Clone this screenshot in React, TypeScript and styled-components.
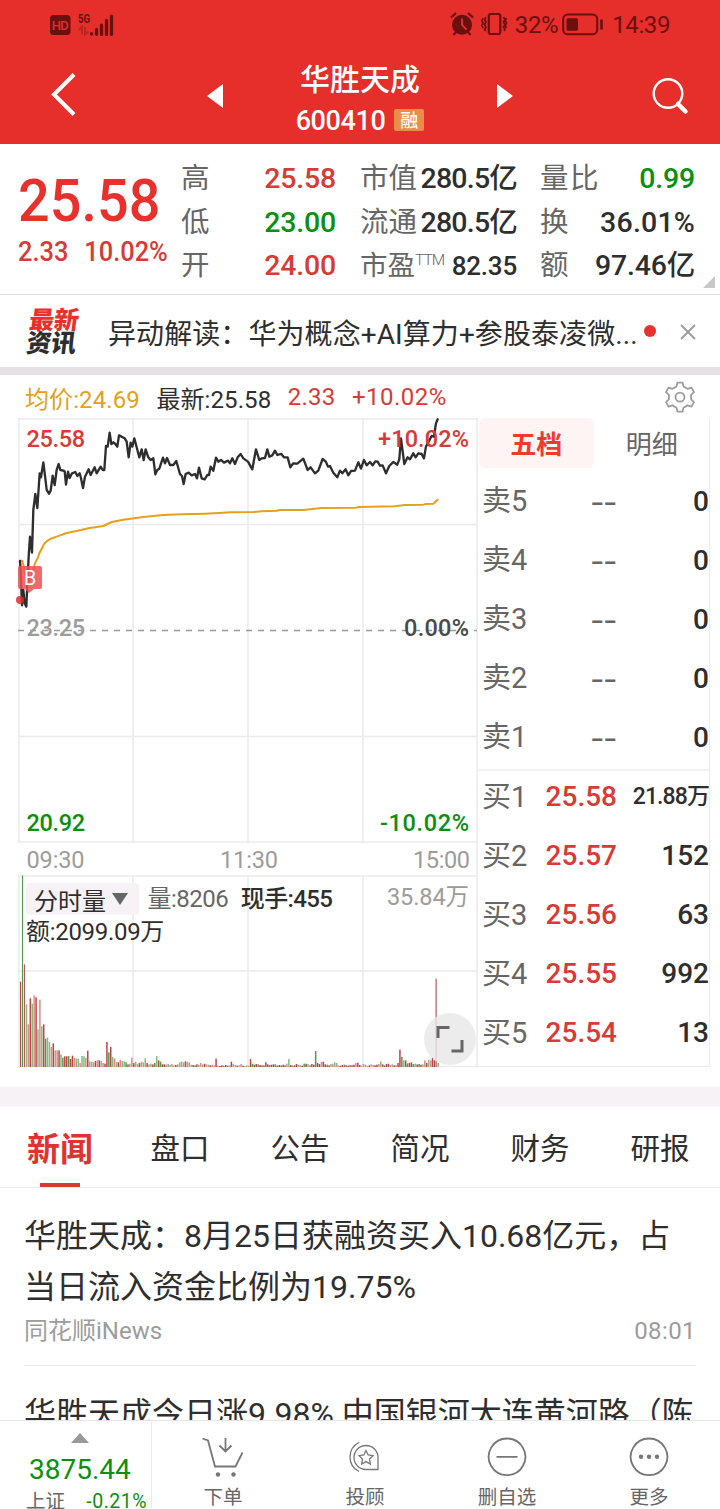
import React from 'react';
import styled, { createGlobalStyle } from 'styled-components';

const RED = '#d93a36';
const GREEN = '#0a8f0f';
const INK = '#2e2e2e';
const GREY = '#666';
const LIGHT = '#9c9c9c';
const FONT = `Roboto, "Noto Sans CJK SC", sans-serif`;

const Global = createGlobalStyle`
  * { box-sizing: border-box; }
  html, body { margin: 0; padding: 0; background: #fff; }
  body { font-family: ${FONT}; color: ${INK}; overflow: hidden; }
`;

const Screen = styled.main`
  width: 720px;
  height: 1509px;
  display: flex;
  flex-direction: column;
  overflow: hidden;
  background: #fff;
`;

type TextProps = { $size: number; $color?: string; $weight?: number; $track?: number };
const Text = styled.span<TextProps>`
  font-size: ${p => p.$size}px;
  color: ${p => p.$color ?? 'inherit'};
  font-weight: ${p => p.$weight ?? 400};
  letter-spacing: ${p => p.$track ?? 0}px;
  white-space: pre;
`;

/* ---------- header ---------- */
const Header = styled.header`
  height: 144px;
  flex: none;
  background: #e62e2b;
  color: #fff;
`;
const StatusBar = styled.div`
  height: 48px;
  padding: 0 50px 0 49px;
  display: flex;
  justify-content: space-between;
  align-items: center;
  color: #6b0f0f;
`;
const StatusGroup = styled.div`
  display: flex;
  align-items: center;
  line-height: 50px;
`;
const StatusText = styled(Text)`
  margin: 1px 4px 0 7px;
  &:last-child { margin: 1px 0 0 8px; }
`;
const NavBar = styled.div`
  height: 96px;
  display: grid;
  grid-template-columns: 125px 470px 125px;
`;
const NavCell = styled.div<{ $end?: boolean }>`
  display: flex;
  justify-content: ${p => (p.$end ? 'flex-end' : 'flex-start')};
  padding: ${p => (p.$end ? '28px 31px 0 0' : '24px 0 0 50px')};
`;
const Switcher = styled.div`
  display: flex;
  justify-content: space-between;
  align-items: flex-start;
  padding: 0 82px;
`;
const Arrow = styled.svg`
  margin-top: 36px;
`;
const TitleBlock = styled.div`
  display: flex;
  flex-direction: column;
  align-items: center;
  padding-top: 12px;
  line-height: 40px;
`;
const CodeRow = styled.div`
  display: flex;
  align-items: center;
  gap: 9px;
  height: 42px;
`;
const Tag = styled.span`
  width: 30px;
  height: 22px;
  margin-top: -2px;
  border-radius: 2px;
  background: #e98d47;
  font-size: 18px;
  font-weight: 500;
  line-height: 23px;
  text-align: center;
`;

/* ---------- quote ---------- */
const Quote = styled.section`
  position: relative;
  height: 151px;
  flex: none;
  display: grid;
  grid-template-columns: 181px 155px 24px 157px 23px 155px;
  border-bottom: 1px solid #e3dfe1;
`;
const Headline = styled.div`
  padding: 26px 0 0 18px;
  display: flex;
  flex-direction: column;
`;
const BigPrice = styled.span`
  font-size: 60px;
  font-weight: 500;
  line-height: 62px;
  width: max-content;
  transform: scaleX(0.93);
  transform-origin: left;
  color: #e8302c;
`;
const ChangeRow = styled.div`
  display: flex;
  gap: 17px;
  line-height: 40px;
  width: max-content;
  transform: scaleX(0.94);
  transform-origin: left;
`;
const StatColumn = styled.div`
  padding-top: 13px;
`;
const Stat = styled.div`
  height: 43.5px;
  line-height: 44px;
  display: flex;
  justify-content: space-between;
`;
const Sup = styled.sup`
  font-size: 15.5px;
  font-weight: 300;
  letter-spacing: -1px;
  line-height: 33px;
  vertical-align: top;
`;
const Corner = styled.i`
  position: absolute;
  right: 5px;
  bottom: 6px;
  border: solid transparent;
  border-width: 0 0 12px 12px;
  border-bottom-color: #c8c8c8;
`;

/* ---------- news strip ---------- */
const Strip = styled.section`
  height: 80px;
  flex: none;
  display: flex;
  align-items: center;
  padding: 1px 24px 0 28px;
  border-bottom: 8px solid #e6e1e5;
`;
const StripLogo = styled.div`
  width: 51px;
  margin: 1px 29px 0 0;
  transform: skewX(-7deg);
  font-weight: 900;
  font-size: 25px;
  line-height: 23px;
  letter-spacing: -0.3px;
  color: #2e2e2e;
`;
const Dot = styled.i`
  width: 12px;
  height: 12px;
  margin: -2px 24px 0 6px;
  border-radius: 50%;
  background: #e8302c;
`;

/* ---------- trading area ---------- */
const Trading = styled.section`
  height: 692px;
  flex: none;
`;
const InfoRow = styled.div`
  height: 43px;
  padding: 1px 24px 0 25px;
  display: flex;
  align-items: center;
  gap: 16.5px;
`;
const Spacer = styled.span`
  flex: 1;
`;
const Panels = styled.div`
  display: flex;
  height: 649px;
  padding-left: 18px;
`;
const Charts = styled.div`
  position: relative;
  width: 460px;
  height: 649px;
`;
const ChartSvg = styled.svg`
  display: block;
  overflow: visible;
`;
const VolumeInfo = styled.div`
  position: absolute;
  left: 8px;
  top: 465px;
  line-height: 33px;
`;
const VolumeLine = styled.div`
  display: flex;
  gap: 12.5px;
`;
const Picker = styled.button`
  border: 0;
  width: 113px;
  height: 32px;
  padding: 0 0 0 8px;
  margin-right: -4px;
  border-radius: 4px;
  background: #f6f2f5;
  font-family: inherit;
  display: flex;
  align-items: center;
  gap: 6px;
  color: ${INK};
`;
const Expand = styled.button`
  position: absolute;
  right: 2px;
  bottom: 2px;
  width: 52px;
  height: 52px;
  border: 0;
  padding: 0;
  border-radius: 50%;
  background: rgba(232, 232, 232, 0.82);
`;
const Book = styled.div`
  width: 232px;
  border: solid #ececec;
  border-width: 0 1px 1px 0;
`;
const BookTabs = styled.div`
  display: grid;
  grid-template-columns: 1fr 1fr;
  height: 52px;
`;
const BookTab = styled.div<{ $active?: boolean }>`
  height: 50px;
  margin-left: 1px;
  border-radius: 6px;
  line-height: 54px;
  text-align: center;
  font-size: 26px;
  font-weight: ${p => (p.$active ? 700 : 400)};
  color: ${p => (p.$active ? '#f0392f' : GREY)};
  background: ${p => (p.$active ? '#fff4f4' : 'transparent')};
`;
const BookSide = styled.div<{ $buy?: boolean }>`
  border-top: ${p => (p.$buy ? '2px solid #f4f2f3' : '0')};
  padding-top: ${p => (p.$buy ? 0 : 4)}px;
  line-height: ${p => (p.$buy ? 52 : 55)}px;
`;
const BookRow = styled.div`
  height: 59px;
  padding: 0 0 0 4px;
  display: grid;
  grid-template-columns: 60px 75px 1fr;
  text-align: right;
`;
const Side = styled(Text)`
  text-align: left;
`;
const NoPrice = styled(Text)`
  transform: translateY(1px) scaleX(1.38);
  transform-origin: right;
`;

/* ---------- news ---------- */
const Tabs = styled.nav`
  height: 101px;
  flex: none;
  margin-top: 20px;
  border-top: 20px solid #f6f2f6;
  border-bottom: 1px solid #ececec;
  display: grid;
  grid-template-columns: repeat(6, 1fr);
`;
const Tab = styled.div<{ $active?: boolean }>`
  display: flex;
  flex-direction: column;
  align-items: center;
  line-height: ${p => (p.$active ? 86 : 84)}px;
  height: 80px;
  font-size: ${p => (p.$active ? 33 : 29.5)}px;
  font-weight: ${p => (p.$active ? 700 : 400)};
  color: ${p => (p.$active ? '#e0322f' : INK)};
  &::after {
    content: '';
    width: 40px;
    height: 4px;
    margin-top: -10px;
    background: ${p => (p.$active ? RED : 'transparent')};
  }
`;
const News = styled.section`
  flex: 1;
  min-height: 0;
  overflow: hidden;
  padding: 0 24px;
`;
const Article = styled.article`
  padding-top: 22.5px;
  height: 178px;
  border-bottom: 1px solid #ececec;
`;
const ArticleTitle = styled.h2`
  margin: 0;
  font-size: 32px;
  font-weight: 400;
  line-height: 51.5px;
  white-space: pre;
`;
const Meta = styled.div`
  display: flex;
  justify-content: space-between;
  line-height: 35px;
`;

/* ---------- footer ---------- */
const Footer = styled.footer`
  height: 89px;
  flex: none;
  display: grid;
  grid-template-columns: 152px repeat(4, 142px);
  border-top: 1px solid #e6e6e6;
`;
const IndexCell = styled.div`
  border-right: 1px solid #ececec;
  height: 88px;
  display: flex;
  flex-direction: column;
`;
const IndexArrow = styled.svg`
  flex: none;
  margin: 12px 0 0 71px;
`;
const IndexValue = styled(Text)`
  padding-left: 29px;
  margin-top: 7px;
  line-height: 40px;
`;
const IndexRow = styled.div`
  display: flex;
  justify-content: space-between;
  margin-top: 1px;
  padding: 0 4px 0 26px;
  line-height: 22px;
`;
const Action = styled.div`
  display: flex;
  flex-direction: column;
  align-items: center;
  padding-top: 13px;
  line-height: 32px;
`;

/* Price series in thirds of a pixel */
const PRICE =
  '60,573 62,600 66,706 70,660 74,700 79,710 82,640 86,560 90,500 96,548 100,420 106,372 112,414 117,340 119,310 123,322 130,277 136,325 140,360 147,371 152,362 158,317 164,345 170,300 176,282 181,300 190,302 194,304 198,344 204,305 209,324 216,310 226,306 232,318 239,310 243,325 249,354 255,320 266,298 272,315 284,292 290,310 302,290 308,300 313,300 318,228 323,230 329,188 334,222 340,217 346,222 352,230 357,196 365,200 374,205 380,215 386,262 392,218 397,230 403,205 410,232 418,262 425,238 431,270 437,238 445,262 452,270 460,265 466,313 472,300 478,296 489,263 495,280 501,264 510,285 520,285 529,273 540,312 546,318 551,342 557,312 566,308 575,316 585,312 591,325 597,293 605,325 614,328 622,315 627,315 632,290 640,302 648,263 655,275 663,270 672,278 684,272 690,280 697,265 705,282 713,262 722,252 730,265 744,275 757,298 768,238 778,270 785,265 795,264 802,238 808,260 817,256 825,242 832,255 844,252 852,262 863,262 871,292 880,280 892,281 910,266 923,300 932,292 945,310 955,302 968,267 978,276 984,290 990,288 1000,308 1012,322 1020,302 1027,310 1037,298 1045,316 1053,303 1065,302 1075,277 1083,296 1092,270 1100,286 1110,276 1118,286 1126,274 1133,275 1140,287 1148,286 1158,310 1168,288 1180,276 1192,284 1198,268 1203,205 1213,282 1223,262 1230,268 1240,250 1247,262 1255,250 1265,252 1272,265 1278,230 1286,215 1295,198 1302,200 1308,160 1313,148';
const AVERAGE =
  '62,572 67,572 76,612 88,640 98,606 105,580 113,565 118,550 126,535 132,522 140,514 150,507 170,500 200,489 230,483 265,475 310,468 335,456 370,449 430,441 490,435 545,433 615,431 695,427 760,426 785,424 830,422 840,420 910,420 965,414 1070,413 1075,411 1185,409 1215,405 1270,404 1278,402 1300,401 1313,389';

/* Volume bars: height in thirds of a pixel, sign gives the direction */
const VOLUME = [
  256, -575, 308, -188, 128, 206, -190, 215, 209, -113, 202, -122, 128, -85, -88, -74, 60, 71, -50, 50, 50, -38,
  -28, 32, 32, -33, 24, 34, 27, -26, -25, 12, -33, -32, 28, 49, -17, 16, -14, 18, 20, 20, -18, 12, 10, 75, -44, 60,
  -30, 26, -15, 14, 22, -18, -17, -14, 8, -10, 28, 12, -16, 10, 12, -16, 14, -26, 12, 8, -10, 8, -12, -33, 20, -16,
  8, 8, 7, -9, -6, 9, -5, 6, 8, -14, -17, 14, 17, -16, 14, -7, 6, -5, 8, -7, 12, -8, 10, 8, -7, 5, 7, -5, 25, 4,
  3, 5, -4, 6, 4, 5, 16, -9, 6, 4, -5, 9, 4, -3, 5, -4, 24, -10, 7, 9, -8, 6, 5, -5, 14, 8, -6, 7, 8, -8, 4, 6,
  -5, 7, 5, 10, -24, 6, -4, 5, 9, 7, -6, 4, -10, 10, -9, 6, 9, 7, -48, 12, 9, 15, 16, 8, -7, 5, -9, 10, -14, -12, 5,
  4, 6, -7, 5, 4, -6, 5, 7, 12, 13, 6, 4, -9, -7, 4, 5, -8, 6, 5, 7, 9, -17, 8, -5, 9, 10, 6, -8, 5, 6, 12, 52, -30, -20,
  20, -11, 12, 14, -9, -10, 8, -9, 7, -8, 20, 12, -22, 20, 28, 20, 265, -12,
];

const barColor = (v: number, i: number) => {
  if (v > 0) return i % 3 === 1 && v < 250 ? '#e98686' : '#b9474a';
  return i % 3 === 1 ? '#4d9f43' : '#87bb7b';
};

const Hd = () => (
  <svg width="70" height="26" viewBox="0 0 70 26">
    <rect x="1" y="4" width="20.500" height="20" rx="3.500" fill="#6b0f0f" />
    <text x="2.800" y="18.600" fontSize="13" fontWeight="500" textLength="17" fill="#e62e2b">HD</text>
    <text x="29" y="12" fontSize="13" fontWeight="700" textLength="12" lengthAdjust="spacingAndGlyphs" fill="#6b0f0f">5G</text>
    <path d="M29.500 19l3.500-3v7.500M36 16v7.500l3.500-3" stroke="#bb2422" strokeWidth="2" fill="none" />
    <g stroke="#6b0f0f" strokeWidth="3.200" strokeLinecap="round">
      <path d="M42.500 22.700v.4M47.500 18.300v5M52.500 14v9.400M57.500 9.400v14M62.500 5v18.400" />
    </g>
  </svg>
);

const Alarm = () => (
  <svg width="58" height="26" viewBox="0 0 58 26" fill="none" stroke="#6b0f0f">
    <circle cx="12" cy="13.800" r="10" fill="#6b0f0f" stroke="none" />
    <path d="M1 6.500l5-4.500M23 6.500l-5-4.500M3.500 24l3-3.500M20.500 24l-3-3.500" strokeWidth="2.200" />
    <path d="M12 7.500v6.500l4.500 4.500" stroke="#e62e2b" strokeWidth="1.800" />
    <rect x="38.800" y="3" width="11.500" height="20" rx="2" strokeWidth="2.200" />
    <path d="M36 6l-1.500 2.500 1.500 2.500-1.500 2.500 1.500 2.500-1.500 2.500 1 1.500M33 7l-1.200 2.500 1.200 2.500-1.200 2.500 1.200 2.500M53.500 6l1.500 2.500-1.500 2.500 1.500 2.500-1.500 2.500 1.500 2.500-1 1.500M56.500 7l-1.200 2.500 1.200 2.500-1.200 2.500 1.200 2.500" strokeWidth="1.700" />
  </svg>
);

const Battery = () => (
  <svg width="42" height="24" viewBox="0 0 42 24">
    <rect x="1.200" y="2.600" width="34" height="19.600" rx="4.500" fill="none" stroke="#6b0f0f" strokeWidth="2" />
    <rect x="4.500" y="6.200" width="11.500" height="12.600" rx="1.500" fill="#6b0f0f" />
    <path d="M39.500 8.500v8" stroke="#6b0f0f" strokeWidth="2.600" strokeLinecap="round" />
  </svg>
);

const Gear = () => (
  <svg width="32" height="32" viewBox="0 0 32 32" fill="none" stroke="#9c9c9c" strokeWidth="1.800" strokeLinejoin="round">
    <path d="M13.400 1.600h5.200l.9 3.900 4 2.300 3.900-1.200 2.600 4.500-2.900 2.700v4.600l2.900 2.700-2.600 4.500-3.900-1.200-4 2.300-.9 3.900h-5.200l-.9-3.900-4-2.300-3.900 1.200L2 21.100l2.900-2.700v-4.600L2 11.100l2.600-4.500 3.900 1.200 4-2.300z" />
    <circle cx="16" cy="16.100" r="4.500" />
  </svg>
);

type Label = { x: number; y: number; w: number; fill: string; text: string; weight?: number };
const LABELS: Label[] = [
  { x: 8.5, y: 29, w: 58.5, fill: RED, text: '25.58', weight: 500 },
  { x: 360, y: 29, w: 91, fill: RED, text: '+10.02%', weight: 500 },
  { x: 8.5, y: 218, w: 58.5, fill: LIGHT, text: '23.25', weight: 500 },
  { x: 386, y: 218, w: 65, fill: '#4a4a4a', text: '0.00%', weight: 500 },
  { x: 8.5, y: 413, w: 58.5, fill: GREEN, text: '20.92', weight: 500 },
  { x: 362, y: 413, w: 89, fill: GREEN, text: '-10.02%', weight: 500 },
  { x: 8.5, y: 450, w: 58, fill: LIGHT, text: '09:30' },
  { x: 202, y: 450, w: 58, fill: LIGHT, text: '11:30' },
  { x: 395, y: 450, w: 57, fill: LIGHT, text: '15:00' },
  { x: 369, y: 486.5, w: 82, fill: LIGHT, text: '35.84万' },
];

const Chart = () => (
  <ChartSvg width="460" height="649" viewBox="0 0 460 649" fontFamily={FONT} fontSize="23.500">
    <g stroke="#ebebeb" strokeWidth="1.600">
      <path d="M1 0V425M115 0V425M230 0V425M345 0V425M459 0V649M0 1H460M0 106.500H460M0 318.500H460M0 424H460" />
      <path d="M1 458V649M115 458V649M230 458V649M345 458V649M0 458H460M0 553H460M0 648.500H460" />
    </g>
    <path d="M0 212.500H459" stroke="#999" strokeWidth="1.700" strokeDasharray="6 6" />
    {VOLUME.map((v, i) => {
      const h = Math.abs(v) / 3;
      return (
        <rect key={i} x={2 + i * 1.915} y={649 - h} width={Math.abs(v) > 250 ? 1.1 : 1.5} height={h} fill={barColor(v, i)} />
      );
    })}
    <g transform="translate(-18 -48) scale(0.3333)" fill="none" strokeLinejoin="round" strokeLinecap="round">
      <polyline points={AVERAGE} stroke="#e5a01c" strokeWidth="6" />
      <polyline points={PRICE} stroke="#2e2e2e" strokeWidth="7" />
    </g>
    <g opacity="0.85">
      <path d="M2 148h20a2 2 0 0 1 2 2v19a2 2 0 0 1-2 2h-6l-5 4-4-4h-5a2 2 0 0 1-2-2v-19a2 2 0 0 1 2-2z" fill="#ec5252" />
      <circle cx="2" cy="182" r="4" fill="#e02f2f" />
    </g>
    <text x="6" y="167" fontSize="19.500" fill="#fff">B</text>
    {LABELS.map(l => (
      <text key={l.text} x={l.x} y={l.y} fill={l.fill} fontWeight={l.weight ?? 400} textLength={l.w}>
        {l.text}
      </text>
    ))}
  </ChartSvg>
);

type Cell = { label: React.ReactNode; value: string; color?: string; size?: number; track?: number; labelSize?: number; labelTrack?: number };
const STATS: Cell[][] = [
  [
    { label: '高', value: '25.58', color: RED },
    { label: '低', value: '23.00', color: GREEN },
    { label: '开', value: '24.00', color: RED },
  ],
  [
    { label: '市值', value: '280.5亿', track: -0.8 },
    { label: '流通', value: '280.5亿', track: -0.8 },
    { label: <>市盈<Sup>TTM</Sup></>, value: '82.35', size: 26, labelSize: 27.5 },
  ],
  [
    { label: '量比', value: '0.99', color: GREEN, labelTrack: 1.5 },
    { label: '换', value: '36.01%', track: 0.2 },
    { label: '额', value: '97.46亿' },
  ],
];

const SELLS = ['卖5', '卖4', '卖3', '卖2', '卖1'];
const BUYS = [
  ['买1', '25.58', '21.88万'],
  ['买2', '25.57', '152'],
  ['买3', '25.56', '63'],
  ['买4', '25.55', '992'],
  ['买5', '25.54', '13'],
];
const TABS = ['新闻', '盘口', '公告', '简况', '财务', '研报'];

const ACTIONS = [
  {
    label: '下单',
    icon: <path d="M1.500 4.500l5.500 2 7 26h20.500l7-14M24.500 4v13.500M18.500 11.500l6 6 6-6" />,
    dots: [[17, 40.5], [32.5, 40.5]],
  },
  {
    label: '投顾',
    icon: (
      <g strokeWidth="1.300">
        <path d="M35 35.500V23.500a12 12 0 1 0-12 12zM16 8.500C4 14.500 4 31.500 16 37.500" />
        <path d="M23 16.500l2.100 4.500 4.900.7-3.500 3.400.8 4.900-4.300-2.400-4.300 2.400.8-4.900-3.500-3.400 4.900-.7z" />
      </g>
    ),
    dots: [],
  },
  { label: '删自选', icon: <path d="M22 4.500a18.300 18.300 0 1 0 .01 0zM11.500 22.800h21" />, dots: [] },
  { label: '更多', icon: <path d="M22 4.500a18.300 18.300 0 1 0 .01 0z" />, dots: [[14, 22.8], [22, 22.8], [30, 22.8]] },
];

export default function App() {
  return (
    <Screen>
      <Global />
      <Header>
        <StatusBar>
          <StatusGroup><Hd /></StatusGroup>
          <StatusGroup>
            <Alarm />
            <StatusText $size={24} $track={-0.4}>32%</StatusText>
            <Battery />
            <StatusText $size={24} $track={-0.4}>14:39</StatusText>
          </StatusGroup>
        </StatusBar>
        <NavBar>
          <NavCell>
            <svg width="28" height="46" viewBox="0 0 28 46" fill="none" stroke="#fff" strokeWidth="4">
              <path d="M24 2.500L4 22.500l20 20" />
            </svg>
          </NavCell>
          <Switcher>
            <Arrow width="16" height="24"><path d="M16 0v24L0 12z" fill="#fff" /></Arrow>
            <TitleBlock>
              <Text $size={30} $weight={500}>华胜天成</Text>
              <CodeRow>
                <Text $size={27} $weight={500} $track={-0.4}>600410</Text>
                <Tag>融</Tag>
              </CodeRow>
            </TitleBlock>
            <Arrow width="16" height="24"><path d="M0 0v24l16-12z" fill="#fff" /></Arrow>
          </Switcher>
          <NavCell $end>
            <svg width="38" height="40" viewBox="0 0 38 40" fill="none" stroke="#fff">
              <circle cx="17" cy="17.500" r="14.300" strokeWidth="2.400" />
              <path d="M27 28l7.500 7.500" strokeWidth="4.500" strokeLinecap="round" />
            </svg>
          </NavCell>
        </NavBar>
      </Header>

      <Quote>
        <Headline>
          <BigPrice>25.58</BigPrice>
          <ChangeRow>
            <Text $size={27} $weight={500} $color={RED}>2.33</Text>
            <Text $size={27} $weight={500} $color={RED}>10.02%</Text>
          </ChangeRow>
        </Headline>
        {STATS.map((col, i) => (
          <React.Fragment key={i}>
            <StatColumn>
              {col.map((s, j) => (
                <Stat key={j}>
                  <Text $size={s.labelSize ?? 28.5} $track={s.labelTrack} $color={GREY}>{s.label}</Text>
                  <Text $size={s.size ?? 28.5} $weight={500} $track={s.track ?? -0.2} $color={s.color}>{s.value}</Text>
                </Stat>
              ))}
            </StatColumn>
            {i < 2 && <span />}
          </React.Fragment>
        ))}
        <Corner />
      </Quote>

      <Strip>
        <StripLogo>
          <Text $size={25} $weight={900} $color="#e8302c" $track={-0.3}>最新</Text>
          <br />
          资讯
        </StripLogo>
        <Text $size={28} $track={0.08}>异动解读：华为概念+AI算力+参股泰凌微...</Text>
        <Dot />
        <svg width="16" height="16" stroke="#999" strokeWidth="1.800"><path d="M1 1l14 14M15 1L1 15" /></svg>
      </Strip>

      <Trading>
        <InfoRow>
          <Text $size={24} $color="#e5a01c" $track={0.1}>均价:24.69</Text>
          <Text $size={24} $track={0.1}>最新:25.58</Text>
          <Text $size={24} $color={RED} $track={0.2}>2.33</Text>
          <Text $size={24} $color={RED} $track={0.5}>+10.02%</Text>
          <Spacer />
          <Gear />
        </InfoRow>
        <Panels>
          <Charts>
            <Chart />
            <VolumeInfo>
              <VolumeLine>
                <Picker>
                  <Text $size={24}>分时量</Text>
                  <svg width="16" height="12"><path d="M0 0h16L8 12z" fill="#666" /></svg>
                </Picker>
                <Text $size={24} $color={GREY} $track={-0.5}>量:8206</Text>
                <Text $size={24} $weight={500} $track={-0.6}>现手:455</Text>
              </VolumeLine>
              <Text $size={24} $track={-0.3}>额:2099.09万</Text>
            </VolumeInfo>
            <Expand>
              <svg width="52" height="52" fill="none" stroke="#666" strokeWidth="3">
                <path d="M14 25V14.500h11.500M27.500 38H38V27" />
              </svg>
            </Expand>
          </Charts>
          <Book>
            <BookTabs>
              <BookTab $active>五档</BookTab>
              <BookTab>明细</BookTab>
            </BookTabs>
            <BookSide>
              {SELLS.map(s => (
                <BookRow key={s}>
                  <Side $size={29} $color={GREY}>{s}</Side>
                  <NoPrice $size={28} $weight={500} $color={GREY}>--</NoPrice>
                  <Text $size={28} $weight={500}>0</Text>
                </BookRow>
              ))}
            </BookSide>
            <BookSide $buy>
              {BUYS.map(([side, price, qty]) => (
                <BookRow key={side}>
                  <Side $size={29} $color={GREY}>{side}</Side>
                  <Text $size={28} $weight={500} $color={RED}>{price}</Text>
                  <Text $size={qty.length > 5 ? 23 : 28} $weight={500} $track={qty.length > 5 ? -0.9 : 0}>{qty}</Text>
                </BookRow>
              ))}
            </BookSide>
          </Book>
        </Panels>
      </Trading>

      <Tabs>
        {TABS.map((t, i) => <Tab key={t} $active={i === 0}>{t}</Tab>)}
      </Tabs>

      <News>
        <Article>
          <ArticleTitle>{'华胜天成：8月25日获融资买入10.68亿元，占\n当日流入资金比例为19.75%'}</ArticleTitle>
          <Meta>
            <Text $size={24} $color={LIGHT}>同花顺iNews</Text>
            <Text $size={24} $color={LIGHT} $track={0.4}>08:01</Text>
          </Meta>
        </Article>
        <Article>
          <ArticleTitle>华胜天成今日涨9.98% 中国银河大连黄河路（陈</ArticleTitle>
        </Article>
      </News>

      <Footer>
        <IndexCell>
          <IndexArrow width="18" height="10"><path d="M0 10h18L9 0z" fill="#999" /></IndexArrow>
          <IndexValue $size={28} $color={GREEN}>3875.44</IndexValue>
          <IndexRow>
            <Text $size={19.5} $color={GREY}>上证</Text>
            <Text $size={19.5} $color={GREEN} $track={0.5}>-0.21%</Text>
          </IndexRow>
        </IndexCell>
        {ACTIONS.map(a => (
          <Action key={a.label}>
            <svg width="44" height="48" viewBox="0 0 44 48" fill="none" stroke="#777" strokeWidth="1.800">
              {a.icon}
              {a.dots.map(([x, y]) => <circle key={x} cx={x} cy={y} r="2.200" fill="#777" stroke="none" />)}
            </svg>
            <Text $size={19.5} $color={GREY}>{a.label}</Text>
          </Action>
        ))}
      </Footer>
    </Screen>
  );
}
